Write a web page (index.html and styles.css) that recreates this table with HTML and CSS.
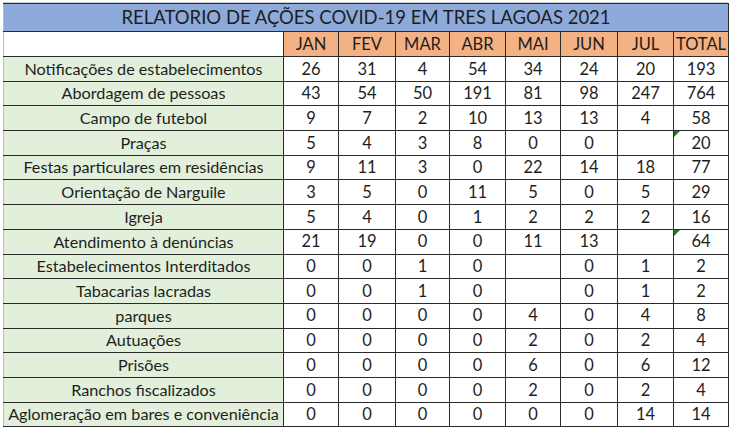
FILE: index.html
```html
<!DOCTYPE html>
<html lang="pt-BR">
<head>
<meta charset="utf-8">
<title>Relatorio de ações COVID-19</title>
<link rel="stylesheet" href="styles.css">
</head>
<body>
<div class="sheet">
  <div class="grid-top"></div>
  <table class="report">
    <colgroup>
      <col class="c-label"><col class="c55"><col class="c57"><col class="c54"><col class="c56"><col class="c55"><col class="c57"><col class="c56"><col class="c55">
    </colgroup>
    <tr class="title-row"><th colspan="9" class="title">RELATORIO DE AÇÕES COVID-19 EM TRES LAGOAS 2021</th></tr>
    <tr class="head-row">
      <th class="blank"></th><th class="mon">JAN</th><th class="mon">FEV</th><th class="mon">MAR</th><th class="mon">ABR</th><th class="mon">MAI</th><th class="mon">JUN</th><th class="mon">JUL</th><th class="mon">TOTAL</th>
    </tr>
    <tr><td class="lbl">Notificações de estabelecimentos</td><td>26</td><td>31</td><td>4</td><td>54</td><td>34</td><td>24</td><td>20</td><td>193</td></tr>
    <tr><td class="lbl">Abordagem de pessoas</td><td>43</td><td>54</td><td>50</td><td>191</td><td>81</td><td>98</td><td>247</td><td>764</td></tr>
    <tr><td class="lbl">Campo de futebol</td><td>9</td><td>7</td><td>2</td><td>10</td><td>13</td><td>13</td><td>4</td><td>58</td></tr>
    <tr><td class="lbl">Praças</td><td>5</td><td>4</td><td>3</td><td>8</td><td>0</td><td>0</td><td></td><td class="flag">20</td></tr>
    <tr><td class="lbl">Festas particulares em residências</td><td>9</td><td>11</td><td>3</td><td>0</td><td>22</td><td>14</td><td>18</td><td>77</td></tr>
    <tr><td class="lbl">Orientação de Narguile</td><td>3</td><td>5</td><td>0</td><td>11</td><td>5</td><td>0</td><td>5</td><td>29</td></tr>
    <tr><td class="lbl">Igreja</td><td>5</td><td>4</td><td>0</td><td>1</td><td>2</td><td>2</td><td>2</td><td>16</td></tr>
    <tr><td class="lbl">Atendimento à denúncias</td><td>21</td><td>19</td><td>0</td><td>0</td><td>11</td><td>13</td><td></td><td class="flag">64</td></tr>
    <tr><td class="lbl">Estabelecimentos Interditados</td><td>0</td><td>0</td><td>1</td><td>0</td><td></td><td>0</td><td>1</td><td>2</td></tr>
    <tr><td class="lbl">Tabacarias lacradas</td><td>0</td><td>0</td><td>1</td><td>0</td><td></td><td>0</td><td>1</td><td>2</td></tr>
    <tr><td class="lbl">parques</td><td>0</td><td>0</td><td>0</td><td>0</td><td>4</td><td>0</td><td>4</td><td>8</td></tr>
    <tr><td class="lbl">Autuações</td><td>0</td><td>0</td><td>0</td><td>0</td><td>2</td><td>0</td><td>2</td><td>4</td></tr>
    <tr><td class="lbl">Prisões</td><td>0</td><td>0</td><td>0</td><td>0</td><td>6</td><td>0</td><td>6</td><td>12</td></tr>
    <tr><td class="lbl">Ranchos fiscalizados</td><td>0</td><td>0</td><td>0</td><td>0</td><td>2</td><td>0</td><td>2</td><td>4</td></tr>
    <tr><td class="lbl">Aglomeração em bares e conveniência</td><td>0</td><td>0</td><td>0</td><td>0</td><td>0</td><td>0</td><td>14</td><td>14</td></tr>
  </table>
</div>
</body>
</html>
```
FILE: styles.css
```css
html, body {
  margin: 0;
  padding: 0;
  background: #ffffff;
}
.sheet {
  width: 731px;
  height: 430px;
  overflow: hidden;
  padding-left: 3px;
  box-sizing: border-box;
  font-family: Lato, "Open Sans", sans-serif;
  color: #1e1e1e;
}
.grid-top {
  height: 2px;
  width: 725px;
  border-bottom: 1px solid #cfcfcf;
}
.report {
  border-collapse: collapse;
  table-layout: fixed;
  width: 725px;
}
.c-label { width: 280px; }
.c54 { width: 54px; }
.c55 { width: 55px; }
.c56 { width: 56px; }
.c57 { width: 57px; }
.report td, .report th {
  border: 1px solid #2b2b2b;
  padding: 0;
  text-align: center;
  font-weight: normal;
  font-size: 16.5px;
  line-height: 1;
  white-space: nowrap;
  overflow: hidden;
}
.report tr { height: 24.7px; }
.report tr.title-row { height: 28px; }
.report tr.head-row { height: 25px; }
.report .title {
  background: #8eaadb;
  font-size: 18.5px;
  border-left: 1px solid #bdbdbd;
}
.report .blank {
  background: #ffffff;
  border-left: 1px solid #bdbdbd;
}
.report .mon { background: #f4b183; }
.report .lbl {
  background: #e2efda;
  font-size: 16.2px;
  border-left: 1px solid #bdbdbd;
}
.report .flag {
  position: relative;
}
.report .flag::before {
  content: "";
  position: absolute;
  left: 0;
  top: 0;
  border-top: 6px solid #1e7a1e;
  border-right: 6px solid transparent;
}
```
